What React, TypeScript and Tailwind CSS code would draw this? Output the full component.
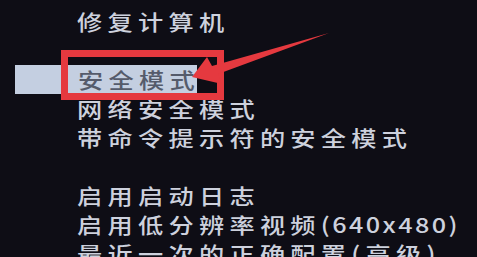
import React from "react";

const lines: (string | null)[] = [
  "修复计算机",
  null,
  "安全模式",
  "网络安全模式",
  "带命令提示符的安全模式",
  null,
  "启用启动日志",
  "启用低分辨率视频|(640x480)",
  "最近一次的正确配置(高级)",
];

const Label = ({ text }: { text: string }) => {
  const [cjk, latin] = text.split("|");
  return (
    <span className="inline-block origin-left scale-x-[1.2] whitespace-nowrap text-[21px] font-medium leading-none tracking-[4.4px]">
      {cjk}
      {latin && <span className="tracking-[2px]">{latin}</span>}
    </span>
  );
};

const App = () => {
  return (
    <div
      className="relative h-[257px] w-[477px] overflow-hidden bg-[#0e0d15] text-[#cdd1dd]"
      style={{ fontFamily: '"Noto Sans CJK SC", "Noto Sans", sans-serif' }}
    >
      <div className="flex flex-col pt-[7px]">
        {lines.map((line, idx) => {
          if (line === null) return <div key={idx} className="h-[29px]" />;
          if (line === "安全模式") {
            return (
              <div key={idx} className="ml-[15px] flex h-[29px] w-[182px] items-center bg-[#c4cfe1] pl-[63px] text-[#555b6b]">
                <Label text={line} />
              </div>
            );
          }
          return (
            <div key={idx} className="flex h-[29px] items-center pl-[77px]">
              <Label text={line} />
            </div>
          );
        })}
      </div>

      {/* red annotation box */}
      <div className="absolute left-[61px] top-[50px] h-[50px] w-[163px] border-[7px] border-[#e5393f]" />

      {/* red arrow */}
      <svg className="absolute left-0 top-0" width="477" height="257" viewBox="0 0 477 257">
        <polygon points="192,77 207,57 212,66 329,33 218,74 222,84" fill="#e5393f" />
      </svg>
    </div>
  );
};

export default App;
